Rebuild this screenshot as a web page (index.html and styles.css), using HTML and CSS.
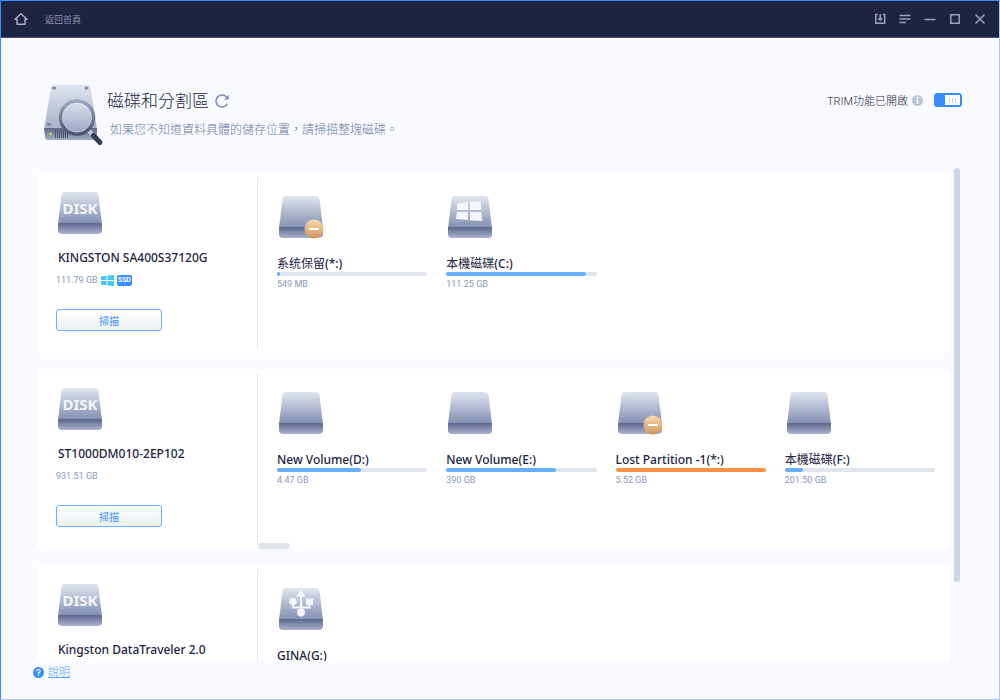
FILE: index.html
```html
<!DOCTYPE html>
<html lang="zh-Hant">
<head>
<meta charset="utf-8">
<title>磁碟和分割區</title>
<meta name="viewport" content="width=device-width, initial-scale=1">
<link rel="stylesheet" href="styles.css">
</head>
<body>
<svg class="defs" width="0" height="0" aria-hidden="true">
  <defs>
    <linearGradient id="top" x1="0" y1="0" x2="0" y2="1"><stop offset="0" stop-color="#e0e6ef"/><stop offset="1" stop-color="#828fb2"/></linearGradient>
    <linearGradient id="front" x1="0" y1="0" x2="0" y2="1"><stop offset="0" stop-color="#5b678c"/><stop offset="1" stop-color="#a9b2cc"/></linearGradient>
    <linearGradient id="gold" x1="0" y1="0" x2="0" y2="1"><stop offset="0" stop-color="#f8dcae"/><stop offset="1" stop-color="#cf945b"/></linearGradient>
    <symbol id="drive" viewBox="0 0 44 42">
      <path d="M7 0H37Q40 0 40.500 3L44 32H0L3.500 3Q4 0 7 0Z" fill="url(#top)"/>
      <path d="M0 31H44V38Q44 42 40 42H4Q0 42 0 38Z" fill="url(#front)"/>
    </symbol>
    <symbol id="lost" viewBox="0 0 20 20">
      <circle cx="10" cy="10" r="9.500" fill="url(#gold)"/>
      <rect x="5" y="9" width="10" height="2" rx="1" fill="#fff"/>
    </symbol>
  </defs>
</svg>
<div class="window">
  <header class="titlebar">
    <button class="home" type="button">
      <svg width="14" height="14" viewBox="0 0 14 14" fill="none" stroke="#a3aecb" stroke-width="1.500" stroke-linejoin="round"><path d="M1 7.300L7 1.700L13 7.300H11V12.200H3V7.300Z"/></svg>
      <span>返回首頁</span>
    </button>
    <nav class="controls" aria-label="視窗">
      <button type="button" aria-label="匯入"><svg width="12" height="12" viewBox="0 0 12 12" fill="none" stroke="#97a2c0" stroke-width="1.500"><path d="M3.800 1.500H1.800V10.300H10.700V1.500H8.700M6.250 1V7M4.300 5.300L6.250 7.300L8.200 5.300"/></svg></button>
      <button type="button" aria-label="選單"><svg width="12" height="12" viewBox="0 0 12 12" fill="none" stroke="#97a2c0" stroke-width="1.500"><path d="M0.500 2.500H11.500M0.500 6H11.500M0.500 9.500H7"/></svg></button>
      <button type="button" aria-label="最小化"><svg width="12" height="12" viewBox="0 0 12 12" fill="none" stroke="#97a2c0" stroke-width="1.500"><path d="M0.500 6.500H11.500"/></svg></button>
      <button type="button" aria-label="最大化"><svg width="12" height="12" viewBox="0 0 12 12" fill="none" stroke="#97a2c0" stroke-width="1.500"><path d="M1.800 1.800H10.200V10.200H1.800Z"/></svg></button>
      <button type="button" aria-label="關閉"><svg width="12" height="12" viewBox="0 0 12 12" fill="none" stroke="#97a2c0" stroke-width="1.500"><path d="M1.500 1.500L10.500 10.500M10.500 1.500L1.500 10.500"/></svg></button>
    </nav>
  </header>

  <main class="main">
    <section class="hero">
      <svg class="hero-icon" width="60" height="62" viewBox="0 0 60 62" aria-hidden="true">
        <defs>
          <linearGradient id="body" x1="0" y1="0" x2="0" y2="1"><stop offset="0" stop-color="#dfe5ef"/><stop offset="1" stop-color="#a6b0ca"/></linearGradient>
          <linearGradient id="face" x1="0" y1="0" x2="0" y2="1"><stop offset="0" stop-color="#5c6786"/><stop offset="1" stop-color="#a4adc6"/></linearGradient>
          <linearGradient id="lens" x1="0" y1="0" x2="0" y2="1"><stop offset="0" stop-color="#dce2ee"/><stop offset="1" stop-color="#98a4c4"/></linearGradient>
          <linearGradient id="ring" x1="0" y1="0" x2="0" y2="1"><stop offset="0" stop-color="#9ba6be"/><stop offset="1" stop-color="#4a5470"/></linearGradient>
        </defs>
        <path d="M9 0H44Q46 0 46.500 3L53 44H0L7 3Q7.500 0 9 0Z" fill="url(#body)"/>
        <path d="M0 43H53V53Q53 55 51 55H4Q1 55 1 52Z" fill="url(#face)"/>
        <g fill="#7f8aa6"><ellipse cx="10" cy="3" rx="2" ry="1.500"/><ellipse cx="42.500" cy="3" rx="2" ry="1.500"/><ellipse cx="5" cy="39.500" rx="2.200" ry="1.800"/></g>
        <circle cx="6.500" cy="49" r="1.500" fill="#a8e05a"/>
        <path d="M11.500 45V53M13.500 45V53M15.500 45V53M17.500 45V53M19.500 45V53M21.500 45V53M23.500 45V53" stroke="#465270"/>
        <path d="M44 45L50 51" stroke="#c2c9d8" stroke-width="4"/>
        <path d="M49.500 50.500L56 57.500" stroke="#333b54" stroke-width="5" stroke-linecap="round"/>
        <circle cx="33" cy="32.500" r="16.500" fill="url(#lens)" stroke="url(#ring)" stroke-width="3.500"/>
        <circle cx="33" cy="32.500" r="14.500" fill="none" stroke="#dfe5ef" stroke-width=".8" opacity=".6"/>
      </svg>
      <div class="hero-text">
        <div class="title-row">
          <h1>磁碟和分割區</h1>
          <button type="button" aria-label="重新整理"><svg width="14" height="14" viewBox="0 0 14 14"><path d="M12.400 9.700A6 6 0 1 1 11.800 3.400" fill="none" stroke="#8091b3" stroke-width="1.600"/><path d="M13.800 0.800V5.500H9.200Z" fill="#8091b3"/></svg></button>
        </div>
        <p>如果您不知道資料具體的儲存位置，請掃描整塊磁碟。</p>
      </div>
      <label class="trim" for="trim">
        <span>TRIM功能已開啟</span>
        <svg width="11" height="11" viewBox="0 0 11 11" aria-hidden="true"><circle cx="5.500" cy="5.500" r="5.500" fill="#bac5da"/><path d="M5.500 2V3.500M5.500 4.500V9" stroke="#fff" stroke-width="1.500"/></svg>
        <input id="trim" type="checkbox" checked>
      </label>
    </section>

    <div class="scroller">
      <div class="cards">
        <article class="card">
          <div class="disk">
            <svg width="44" height="42" viewBox="0 0 44 42"><use href="#drive"/><text class="disk-label" x="22" y="22">DISK</text></svg>
            <h2>KINGSTON SA400S37120G</h2>
            <div class="meta"><span>111.79 GB</span>
              <svg width="13" height="11" viewBox="0 0 13 11" fill="#43c8fb" aria-label="Windows"><path d="M0 1.500L5.500 0.700V5H0ZM6.500 0.600L13 0V5H6.500ZM0 6H5.500V10.300L0 9.500ZM6.500 6H13V11L6.500 10.400Z"/></svg>
              <span class="ssd">SSD</span></div>
            <button class="scan" type="button">掃描</button>
          </div>
          <div class="parts">
            <div class="part"><div class="part-icon"><svg width="44" height="42"><use href="#drive"/></svg><svg class="badge" width="20" height="20"><use href="#lost"/></svg></div>
              <h3><span class="han">系统保留</span>(*:)</h3><div class="bar"><i style="width:2%"></i></div><span class="size">549 MB</span></div>
            <div class="part"><div class="part-icon"><svg width="44" height="42" viewBox="0 0 44 42"><use href="#drive"/><path d="M9 7.500L20 6V14H9ZM22 5.800L33 5V14H22ZM9 16H20V24L8 23ZM22 16H33.500L34 25L22 24.200Z" fill="#f3f6fb"/></svg></div>
              <h3><span class="han">本機磁碟</span>(C:)</h3><div class="bar"><i style="width:93%"></i></div><span class="size">111.25 GB</span></div>
          </div>
        </article>

        <article class="card">
          <div class="disk">
            <svg width="44" height="42" viewBox="0 0 44 42"><use href="#drive"/><text class="disk-label" x="22" y="22">DISK</text></svg>
            <h2>ST1000DM010-2EP102</h2>
            <div class="meta"><span>931.51 GB</span></div>
            <button class="scan" type="button">掃描</button>
          </div>
          <div class="parts">
            <div class="part"><div class="part-icon"><svg width="44" height="42"><use href="#drive"/></svg></div>
              <h3>New Volume(D:)</h3><div class="bar"><i style="width:56%"></i></div><span class="size">4.47 GB</span></div>
            <div class="part"><div class="part-icon"><svg width="44" height="42"><use href="#drive"/></svg></div>
              <h3>New Volume(E:)</h3><div class="bar"><i style="width:73%"></i></div><span class="size">390 GB</span></div>
            <div class="part"><div class="part-icon"><svg width="44" height="42"><use href="#drive"/></svg><svg class="badge" width="20" height="20"><use href="#lost"/></svg></div>
              <h3>Lost Partition -1(*:)</h3><div class="bar full"><i style="width:100%"></i></div><span class="size">5.52 GB</span></div>
            <div class="part"><div class="part-icon"><svg width="44" height="42"><use href="#drive"/></svg></div>
              <h3><span class="han">本機磁碟</span>(F:)</h3><div class="bar"><i style="width:12%"></i></div><span class="size">201.50 GB</span></div>
            <div class="hthumb"></div>
          </div>
        </article>

        <article class="card">
          <div class="disk">
            <svg width="44" height="42" viewBox="0 0 44 42"><use href="#drive"/><text class="disk-label" x="22" y="22">DISK</text></svg>
            <h2>Kingston DataTraveler 2.0</h2>
          </div>
          <div class="parts">
            <div class="part"><div class="part-icon"><svg width="44" height="42" viewBox="0 0 44 42"><use href="#drive"/><g fill="#f3f6fb"><path d="M22 2L27 8.500H17Z"/><circle cx="14" cy="13.500" r="3.700"/><rect x="27" y="10.500" width="7" height="6.500"/><circle cx="22" cy="24.500" r="4"/></g><path d="M22 7V24M14 15V19.500H30.500V15" fill="none" stroke="#f3f6fb" stroke-width="2"/></svg></div>
              <h3>GINA(G:)</h3></div>
          </div>
        </article>
      </div>
      <div class="vthumb"></div>
    </div>
  </main>

  <footer class="footer">
    <svg width="11" height="11" viewBox="0 0 11 11" aria-hidden="true"><circle cx="5.500" cy="5.500" r="5.500" fill="#3a8fff"/><path d="M3.800 4.200Q3.900 2.500 5.500 2.500T7.200 4.100Q7.100 5 5.500 5.900V6.700M5.500 7.500V8.800" fill="none" stroke="#fff" stroke-width="1.200"/></svg>
    <a href="#">說明</a>
  </footer>
</div>
</body>
</html>
```

FILE: styles.css
```css
* { box-sizing: border-box; }
body, h1, h2, h3, p { margin: 0; }
body {
  font-family: "Noto Sans", "Noto Sans CJK TC", sans-serif;
  color: #1d2340;
}
button { border: 0; padding: 0; background: none; font: inherit; cursor: pointer; }
svg { display: block; flex: none; }
.defs { position: absolute; }

.window {
  display: flex;
  flex-direction: column;
  height: 100vh;
  background: #f9faff;
  border: 1px solid #3a8bff;
  border-right-color: #a9c8f8;
  border-bottom-color: #a9c8f8;
}
.titlebar {
  display: flex;
  flex: none;
  align-items: center;
  justify-content: space-between;
  height: 37px;
  padding: 0 13px;
  background: #1e2340;
  border-bottom: 1px solid #4d5069;
}
.home { display: flex; align-items: center; gap: 17px; font-size: 9px; color: #8a94b2; }
.controls { display: flex; gap: 13px; }

.main { display: flex; flex: 1; flex-direction: column; min-height: 0; padding: 47px 37px 0 36px; }
.hero { display: flex; flex: none; align-items: flex-start; height: 83px; }
.hero-icon { margin-left: 7px; }
.hero-text { flex: 1; padding: 4px 0 0 3px; }
.title-row { display: flex; align-items: center; gap: 6px; height: 24px; }
h1 { font-size: 17px; font-weight: 300; line-height: 24px; }
.hero p { padding-left: 3px; margin-top: 8px; font-size: 12px; font-weight: 300; line-height: 18px; color: #6b7ca3; }
.trim { display: flex; align-items: center; gap: 4px; height: 16px; margin-top: 7px; font-family: Roboto, "Noto Sans CJK TC", sans-serif; font-size: 11px; font-weight: 300; }
.trim input {
  appearance: none;
  width: 28px;
  height: 14px;
  margin: 0 0 0 7px;
  border: 1px solid #3a8bff;
  border-radius: 3px;
  background: #3a8bff;
}
.trim input:checked {
  background:
    linear-gradient(#c3cde0, #c3cde0) 14px 4px / 1px 5px no-repeat,
    linear-gradient(#c3cde0, #c3cde0) 17px 4px / 1px 5px no-repeat,
    linear-gradient(#c3cde0, #c3cde0) 20px 4px / 1px 5px no-repeat,
    linear-gradient(#fff, #fff) 10px 1px / 15px 10px no-repeat,
    #3a8bff;
}

.scroller { display: flex; flex: 1; gap: 4px; min-height: 0; margin-right: -37px; padding-right: 39px; }
.cards { display: flex; flex: 1; flex-direction: column; gap: 16px; min-width: 0; padding-top: 5px; overflow: hidden; }
.vthumb { flex: none; width: 6px; height: 84%; border-radius: 3px; background: #ccd6e5; }
.card {
  display: grid;
  flex: none;
  grid-template-columns: 220px 1fr;
  height: 180px;
  padding: 4px 0;
  border-radius: 4px;
  background: #fff;
}
.disk { display: flex; flex-direction: column; align-items: flex-start; padding: 15px 0 0 19px; }
.disk > svg { margin-left: 2px; }
.disk-label { font-size: 15px; font-weight: 700; text-anchor: middle; fill: #f3f6fb; }
h2, h3 { font-size: 12px; font-weight: 500; line-height: 16px; white-space: nowrap; }
h2 { margin: 16px 0 0 2px; }
.han { font-weight: 400; }
.meta { display: flex; align-items: center; gap: 3px; height: 12px; margin-top: 8px; font-size: 9px; color: #8a97b8; }
.meta, .size { font-family: Roboto, sans-serif; }
.ssd { padding: 0 1px; border-radius: 2px; background: #3a8fff; font-size: 7px; font-weight: 700; line-height: 11px; color: #fff; }
.scan {
  width: 106px;
  height: 22px;
  margin-top: 23px;
  border: 1px solid #6bb0ff;
  border-radius: 3px;
  background: linear-gradient(#fff, #edf1f5);
  font-size: 10px;
  color: #3a8fff;
}
.parts {
  position: relative;
  display: grid;
  grid-template-columns: repeat(4, 1fr);
  column-gap: 19px;
  padding: 19px 15px 0 19px;
  border-left: 1px solid #e4e8f0;
}
.part { display: flex; flex-direction: column; align-items: flex-start; min-width: 0; }
.part-icon { position: relative; margin: 0 0 18px 2px; }
.badge { position: absolute; right: -1px; bottom: -1px; }
.bar { width: 100%; height: 4px; border-radius: 2px; background: #dfe4ed; }
.bar i { display: block; height: 4px; border-radius: 2px; background: #68aeff; }
.bar.full i { background: #ff8f43; }
.size { margin-top: 2px; font-size: 9px; line-height: 12px; color: #8a97b8; }
.hthumb { position: absolute; bottom: -4px; left: 0; width: 32px; height: 6px; border-radius: 3px; background: #dfe4ed; }

.footer { display: flex; flex: none; align-items: center; gap: 4px; height: 38px; padding: 0 32px 16px; }
.footer a { font-size: 11px; font-weight: 300; line-height: 16px; color: #55a5ff; }
```
